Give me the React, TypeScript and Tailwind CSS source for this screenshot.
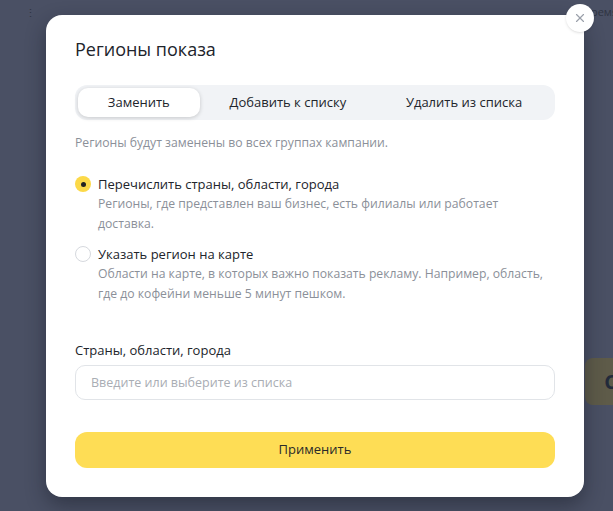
import React, { useState } from 'react';
import { X } from 'lucide-react';

const tabs = ['Заменить', 'Добавить к списку', 'Удалить из списка'];

const options = [
  {
    title: 'Перечислить страны, области, города',
    text: 'Регионы, где представлен ваш бизнес, есть филиалы или работает доставка.',
  },
  {
    title: 'Указать регион на карте',
    text: 'Области на карте, в которых важно показать рекламу. Например, область, где до кофейни меньше 5 минут пешком.',
  },
];

function Radio({ checked }: { checked: boolean }) {
  if (checked) {
    return (
      <span className="mt-[2px] flex h-4 w-4 shrink-0 items-center justify-center rounded-full bg-[#fcd948]">
        <span className="h-[5px] w-[5px] rounded-full bg-[#222]" />
      </span>
    );
  }
  return <span className="mt-[2px] h-4 w-4 shrink-0 rounded-full border border-[#d6d9de] bg-white" />;
}

function App() {
  const [tab, setTab] = useState(0);
  const [mode, setMode] = useState(0);

  return (
    <div className="relative h-[511px] w-full overflow-hidden bg-[#4a5064] font-['Open_Sans',sans-serif]">
      {/* dimmed page behind the dialog */}
      <div className="flex h-9 items-start justify-between px-[25px] pt-[10px]">
        <span className="text-[11px] leading-[5px] text-[#2f3442]">⋮</span>
        <span className="-mr-[30px] -mt-[6px] text-[11px] text-[#2f3442]">Время</span>
      </div>
      <div className="absolute right-0 top-[358px] flex h-[47px] w-[28px] items-center justify-end rounded-l-lg bg-[#5e5b49]">
        <span className="-mr-[4px] text-[20px] font-bold text-[#222a3a]">С</span>
      </div>

      {/* dialog */}
      <div className="absolute left-[46px] top-[15px] w-[538px] rounded-[16px] bg-white px-[29px] pb-[29px] pt-[22px] shadow-[0_8px_20px_rgba(20,24,35,0.45)]">
        <h2 className="text-[18px] font-medium leading-6 text-[#21242b]">Регионы показа</h2>

        <div className="mt-[24px] flex rounded-[12px] bg-[#f1f3f6] p-[3px]">
          {tabs.map((t, i) => (
            <button
              key={t}
              onClick={() => setTab(i)}
              className={
                i === tab
                  ? 'h-[29px] flex-auto rounded-[10px] bg-white text-[13px] text-[#21242b] shadow-[0_1px_4px_rgba(0,0,0,0.18)]'
                  : 'h-[29px] flex-auto rounded-[10px] text-[13px] text-[#21242b]'
              }
            >
              {t}
            </button>
          ))}
        </div>

        <p className="mt-[13px] text-[12.2px] leading-5 text-[#8b9099]">Регионы будут заменены во всех группах кампании.</p>

        <div className="mt-[21px] flex flex-col gap-[10px]">
          {options.map((o, i) => (
            <label key={o.title} className="flex cursor-pointer gap-[7px]" onClick={() => setMode(i)}>
              <Radio checked={mode === i} />
              <div className="max-w-[455px]">
                <div className="text-[13px] leading-5 text-[#21242b]">{o.title}</div>
                <div className="text-[12.2px] leading-5 text-[#8b9099]">{o.text}</div>
              </div>
            </label>
          ))}
        </div>

        <div className="mt-[36px] text-[13px] leading-5 text-[#21242b]">Страны, области, города</div>
        <input
          placeholder="Введите или выберите из списка"
          className="mt-[5px] h-[35px] w-full rounded-[10px] border border-[#e1e4e8] px-[15px] text-[12.5px] text-[#21242b] outline-none placeholder:text-[#a9adb4]"
        />

        <button className="mt-[32px] h-[36px] w-full rounded-[12px] bg-[#fedd55] text-[13px] text-[#2a2a2a]">Применить</button>

        <button className="absolute -right-[10px] -top-[11px] flex h-[28px] w-[28px] items-center justify-center rounded-full bg-white shadow-sm">
          <X className="h-[14px] w-[14px] text-[#9aa0aa]" strokeWidth={2} />
        </button>
      </div>
    </div>
  );
}

export default App;
